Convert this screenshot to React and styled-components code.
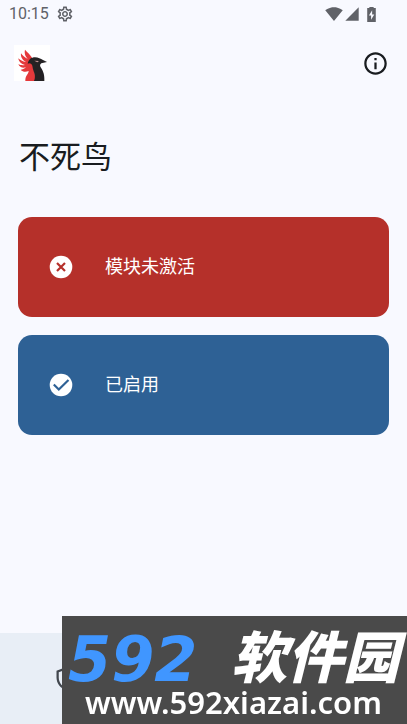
import React from "react";
import styled, { createGlobalStyle } from "styled-components";
import {
  MdInfoOutline,
  MdOutlineSettings,
  MdOutlineShield,
  MdSignalCellular4Bar,
  MdSignalWifi4Bar,
} from "react-icons/md";

const GlobalStyle = createGlobalStyle`
  * {
    box-sizing: border-box;
  }

  body {
    margin: 0;
    background: #f8f9ff;
    color: #191c20;
    font-family: Roboto, "Noto Sans CJK SC", sans-serif;
  }
`;

const Screen = styled.div`
  display: flex;
  flex-direction: column;
  min-height: 100vh;
`;

const StatusBar = styled.div`
  display: flex;
  align-items: center;
  justify-content: space-between;
  height: 28px;
  padding: 0 31px 0 9px;
  color: #606268;
`;

const StatusGroup = styled.div`
  display: flex;
  align-items: center;
  gap: ${(props) => props.$gap}px;
`;

const Clock = styled.span`
  font-size: 16px;
  line-height: 20px;
`;

const BatteryIcon = styled.svg`
  width: 9px;
  height: 15px;
  margin-left: 6px;
`;

const AppBar = styled.header`
  display: flex;
  align-items: center;
  justify-content: space-between;
  height: 70px;
  padding: 0 18px 0 14px;
`;

const Logo = styled.svg`
  width: 36px;
  height: 36px;
  background: #fff;
`;

const IconButton = styled.button`
  display: flex;
  padding: 0;
  border: none;
  background: none;
  color: #191c20;
  cursor: pointer;
`;

const Title = styled.h1`
  margin: 36px 19px;
  font-size: 31px;
  font-weight: 400;
  line-height: 47px;
`;

const Cards = styled.main`
  display: flex;
  flex: 1;
  flex-direction: column;
  gap: 18px;
  padding: 0 18px;
`;

const Card = styled.button`
  display: flex;
  align-items: center;
  gap: 32px;
  height: 100px;
  padding: 0 31px;
  border: none;
  border-radius: 14px;
  background: ${(props) => props.$color};
  color: #fff;
  font-family: inherit;
  font-size: 18px;
  line-height: 28px;
  cursor: pointer;
`;

const CardIcon = styled.svg`
  width: 24px;
  height: 24px;
`;

const NavBar = styled.nav`
  display: grid;
  grid-template-columns: repeat(3, 1fr);
  height: 91px;
  padding-right: 16px;
  background: #e8eef6;
`;

const NavButton = styled(IconButton)`
  align-items: center;
  justify-content: center;
  color: #42474e;
`;

const Banner = styled.a`
  position: fixed;
  right: 0;
  bottom: 0;
  left: 62px;
  height: 108px;
  padding: 14px 8px 0 6px;
  background: #4a4a4a;
  color: #fff;
  text-decoration: none;
`;

const BannerName = styled.div`
  display: flex;
  align-items: center;
  justify-content: space-between;
  height: 54px;
  font-style: italic;
`;

const BannerNumber = styled.span`
  padding-top: 6px;
  color: #4096ff;
  font-family: "DejaVu Sans", sans-serif;
  font-size: 62px;
  font-weight: 700;
  line-height: 48px;
`;

const BannerTitle = styled.span`
  padding-bottom: 6px;
  font-family: "Noto Sans CJK SC", sans-serif;
  font-size: 56px;
  font-weight: 900;
  line-height: 48px;
`;

const BannerUrl = styled.div`
  font-family: "Noto Sans", sans-serif;
  font-size: 31px;
  font-weight: 600;
  line-height: 36px;
  text-align: center;
`;

function PhoenixLogo() {
  return (
    <Logo viewBox="0 0 108 108" role="img" aria-label="不死鸟">
      <path
        fill="#e5393b"
        d="M33 14C30 26 35 36 42 42C32 38 25 31 21 25C19 36 26 46 36 51C26 50 18 45 13 40C14 50 22 57 33 60C25 62 18 60 13 58C17 67 26 70 36 67C31 72 25 74 20 74C27 82 36 81 44 78C44 87 34 90 34 108H64L60 50L53 37C49 29 40 22 33 14Z"
      />
      <path
        fill="#252223"
        d="M41 56C44 43 52 37 63 37C73 37 80 42 87 45L99 51L82 55C77 58 77 63 82 70C88 80 92 90 91 108H60C66 96 61 85 58 76C55 68 57 61 51 56C48 54 44 54 41 56Z"
      />
      <path fill="#c99a9a" d="M61 47L75 48L70 52Z" />
    </Logo>
  );
}

function App() {
  return (
    <Screen>
      <GlobalStyle />
      <StatusBar>
        <StatusGroup $gap={7}>
          <Clock>10:15</Clock>
          <MdOutlineSettings size={18} />
        </StatusGroup>
        <StatusGroup $gap={1}>
          <MdSignalWifi4Bar size={18} />
          <MdSignalCellular4Bar size={16} />
          <BatteryIcon viewBox="0 0 8 14">
            <path
              fill="currentColor"
              fillRule="evenodd"
              d="M2 0h4v1h2v13H0V1h2zM4.6 3L1.6 8h2v4l3-5h-2z"
            />
          </BatteryIcon>
        </StatusGroup>
      </StatusBar>

      <AppBar>
        <PhoenixLogo />
        <IconButton aria-label="关于">
          <MdInfoOutline size={27} />
        </IconButton>
      </AppBar>

      <Title>不死鸟</Title>

      <Cards>
        <Card $color="#b5302a">
          <CardIcon viewBox="0 0 24 24">
            <circle cx="12" cy="12" r="11.3" fill="#fff" />
            <path
              d="M8 8l8 8M16 8l-8 8"
              fill="none"
              stroke="#b5302a"
              strokeWidth="2.2"
            />
          </CardIcon>
          模块未激活
        </Card>
        <Card $color="#2e6195">
          <CardIcon viewBox="0 0 24 24">
            <circle cx="12" cy="12" r="11.3" fill="#fff" />
            <path
              d="M4.8 11.5l5 5L19.5 7"
              fill="none"
              stroke="#2e6195"
              strokeWidth="2.2"
            />
          </CardIcon>
          已启用
        </Card>
      </Cards>

      <NavBar>
        <NavButton aria-label="模块">
          <MdOutlineShield size={27} />
        </NavButton>
      </NavBar>

      <Banner href="#">
        <BannerName>
          <BannerNumber>592</BannerNumber>
          <BannerTitle>软件园</BannerTitle>
        </BannerName>
        <BannerUrl>www.592xiazai.com</BannerUrl>
      </Banner>
    </Screen>
  );
}

export default App;
